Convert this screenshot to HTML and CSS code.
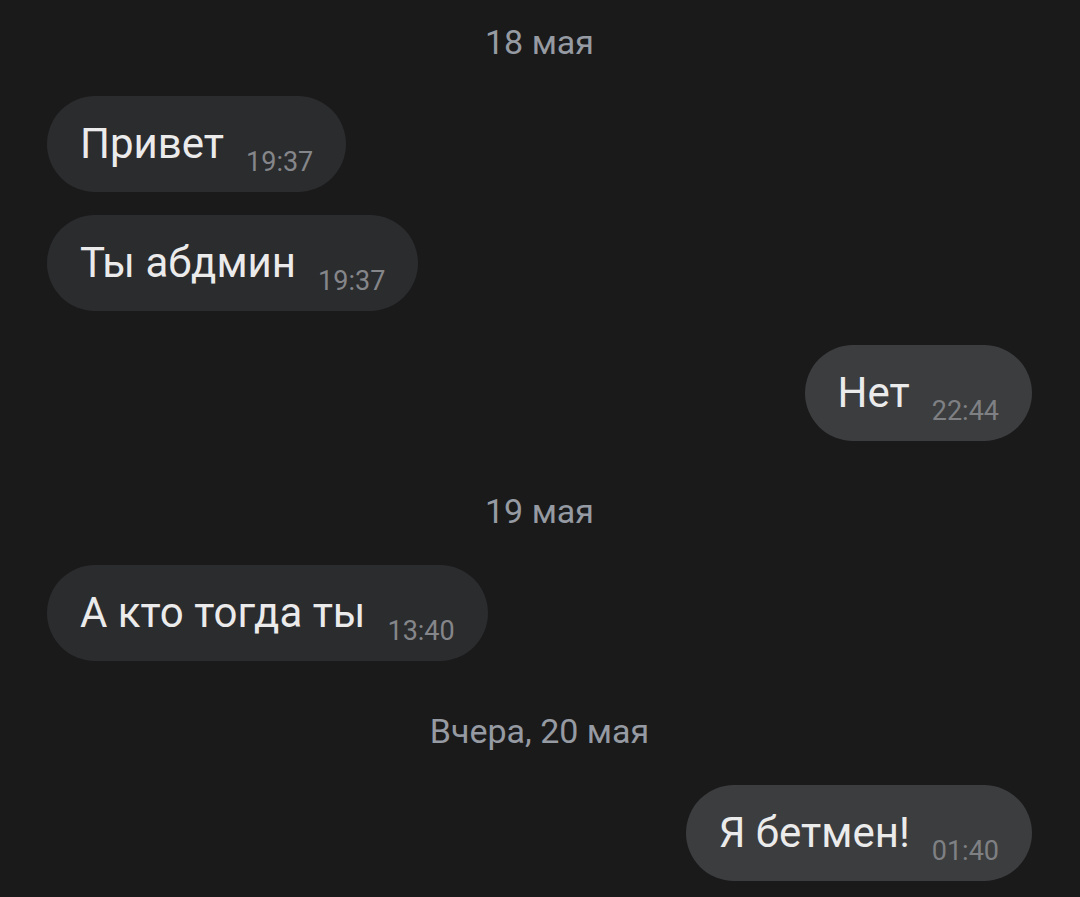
FILE: index.html
```html
<!DOCTYPE html>
<html>

<head>
    <meta name="viewport" content="width=device-width, initial-scale=1" />
    <title>Чат</title>
    <link rel="stylesheet" href="styles.css">
</head>

<body>
    <div class="chat">
        <div class="day">18 мая</div>
        <div class="row in"><div class="msg">Привет<span class="t">19:37</span></div></div>
        <div class="row in next"><div class="msg">Ты абдмин<span class="t">19:37</span></div></div>
        <div class="row out"><div class="msg">Нет<span class="t">22:44</span></div></div>

        <div class="day">19 мая</div>
        <div class="row in"><div class="msg">А кто тогда ты<span class="t">13:40</span></div></div>

        <div class="day">Вчера, 20 мая</div>
        <div class="row out"><div class="msg">Я бетмен!<span class="t">01:40</span></div></div>
    </div>
</body>

</html>
```

FILE: styles.css
```css
html,
body {
    margin: 0;
    background-color: #1a1a1b;
}

body {
    font-family: Roboto, "Noto Sans", sans-serif;
    color: #ebebeb;
}

.chat {
    padding: 22px 48px 16px 47px;
    display: flex;
    flex-direction: column;
}

.day {
    text-align: center;
    font-size: 34px;
    line-height: 40px;
    color: #969aa2;
    margin: 50px 0 34px 0;
}

.chat .day:first-child {
    margin-top: 0;
}

.row {
    display: flex;
    margin-top: 34px;
}

.day + .row {
    margin-top: 0;
}

.row.next {
    margin-top: 23px;
}

.row.out {
    justify-content: flex-end;
}

.msg {
    height: 96px;
    box-sizing: border-box;
    font-size: 42px;
    line-height: 48px;
    padding: 24px 33px 24px 33px;
    border-radius: 48px;
    background-color: #2b2c2e;
    white-space: nowrap;
    overflow: hidden;
}

.out .msg {
    background-color: #3c3d3f;
}

.t {
    font-size: 27px;
    line-height: 10px;
    color: #85868a;
    margin-left: 22px;
    vertical-align: -13px;
}

.out .t {
    color: #7e8083;
}
```
